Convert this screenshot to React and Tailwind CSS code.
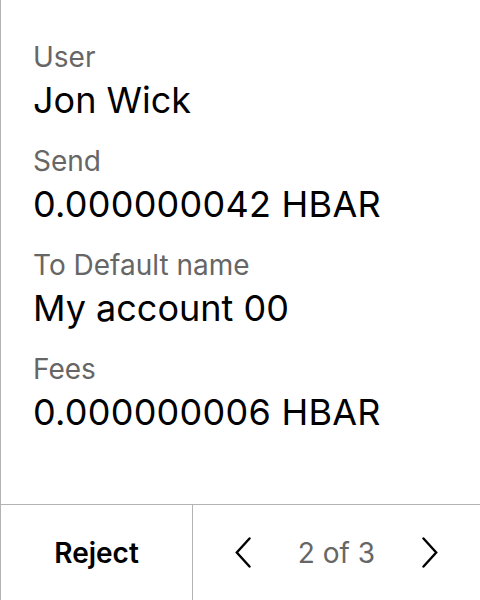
import React from "react";

function Chevron({ dir }) {
  const d = dir === "left" ? "M14.5 1.5 L1.8 15.5 L14.5 29.5" : "M1.5 1.5 L14.2 15.5 L1.5 29.5";
  return (
    <svg width="16" height="31" viewBox="0 0 16 31" fill="none">
      <path d={d} stroke="#000" strokeWidth="2.4" strokeLinecap="round" strokeLinejoin="miter" />
    </svg>
  );
}

function Item({ label, value, num }) {
  return (
    <div className="flex flex-col">
      <div className="text-[28px] leading-[32px] text-[#666666]">{label}</div>
      <div className={num ? "mt-[6px] text-[36px] leading-[43px] text-black tracking-[0.25px]" : "mt-[6px] text-[36px] leading-[43px] text-black"}>
        {value}
      </div>
    </div>
  );
}

export default function App() {
  return (
    <div
      className="w-[480px] h-[600px] flex flex-col bg-white border-l border-[#b3b3b3]"
      style={{ fontFamily: "Inter, 'Noto Sans', sans-serif" }}
    >
      <div className="flex-1 flex flex-col gap-[23px] pl-[32px] pt-[41px]">
        <Item label="User" value="Jon Wick" />
        <Item label="Send" value="0.000000042 HBAR" num />
        <Item label="To Default name" value="My account 00" />
        <Item label="Fees" value="0.000000006 HBAR" num />
      </div>
      <div className="h-[96px] flex border-t border-[#b3b3b3]">
        <div className="w-[192px] flex items-center justify-center border-r border-[#b3b3b3] text-[28px] font-semibold text-black">
          Reject
        </div>
        <div className="flex-1 flex items-center justify-center gap-[47px]">
          <Chevron dir="left" />
          <span className="text-[28px] text-[#666666]">2 of 3</span>
          <Chevron dir="right" />
        </div>
      </div>
    </div>
  );
}
